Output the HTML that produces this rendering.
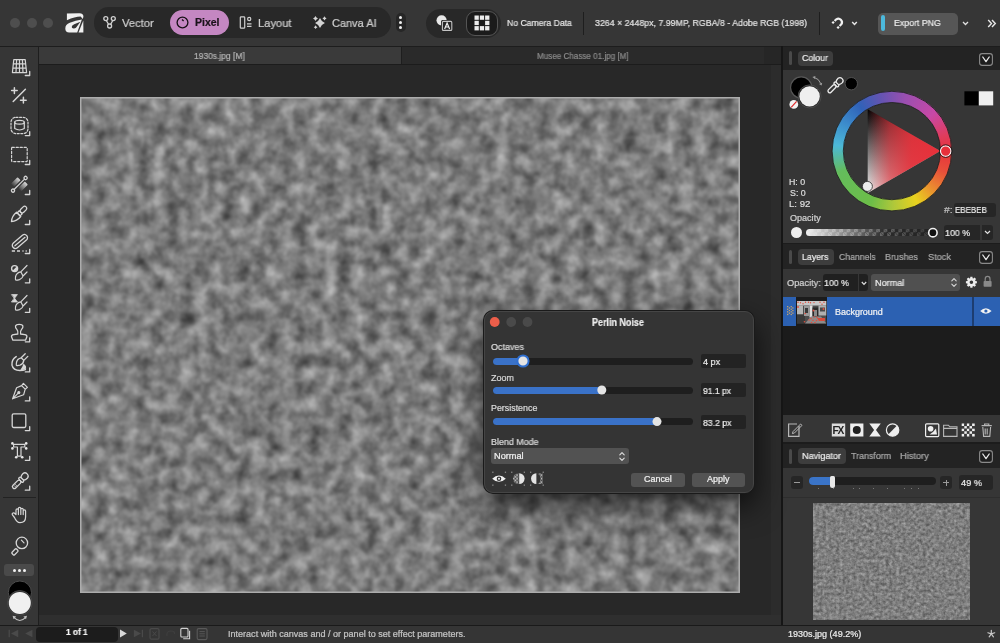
<!DOCTYPE html>
<html><head><meta charset="utf-8">
<style>
*{box-sizing:border-box;margin:0;padding:0}
html,body{width:1000px;height:643px;overflow:hidden;background:#363636;font-family:"Liberation Sans",sans-serif;color:#e6e6e6}
.abs{position:absolute}
.t{white-space:nowrap;line-height:1;will-change:transform;-webkit-text-stroke:0.22px currentColor}
svg{position:absolute;overflow:visible}
.dot{top:17.5px;width:10px;height:10px;border-radius:50%;background:#4e4e4e}
.pill{border-radius:15px;background:#282828}
.kd{left:399px;width:3.4px;height:3.4px;border-radius:50%;background:#f0f0f0}
.hdr{background:#232323}
.tabsel{background:#3d3d3d;border-radius:4px}
.ibox{background:#262626;border-radius:3px}
</style></head><body>
<div class="abs" style="left:0px;top:0px;width:1000.00px;height:46.00px;background:#363636;"></div>
<div class="abs" style="left:0px;top:46px;width:1000.00px;height:1.00px;background:#1d1d1d;"></div>
<div class="abs" style="left:0px;top:47px;width:38.00px;height:578.00px;background:#363636;"></div>
<div class="abs" style="left:38px;top:47px;width:1.00px;height:578.00px;background:#1e1e1e;"></div>
<div class="abs" style="left:39px;top:47px;width:742.00px;height:17.00px;background:#262626;"></div>
<div class="abs" style="left:39px;top:64px;width:742.00px;height:1.00px;background:#1c1c1c;"></div>
<div class="abs" style="left:39px;top:65px;width:742.00px;height:560.00px;background:#282828;"></div>
<div class="abs" style="left:771px;top:65px;width:10.00px;height:550.00px;background:#2c2c2c;"></div>
<div class="abs" style="left:39px;top:615px;width:742.00px;height:10.00px;background:#2f2f2f;"></div>
<div class="abs" style="left:781px;top:46px;width:2.00px;height:579.00px;background:#161616;"></div>
<div class="abs" style="left:783px;top:47px;width:217.00px;height:578.00px;background:#363636;"></div>
<div class="abs" style="left:0px;top:625px;width:1000.00px;height:1.00px;background:#1a1a1a;"></div>
<div class="abs" style="left:0px;top:626px;width:1000.00px;height:17.00px;background:#353535;"></div>
<div class="abs dot" style="left:10px"></div><div class="abs dot" style="left:26.5px"></div><div class="abs dot" style="left:43px"></div>
 <svg style="left:60px;top:8px" width="30" height="30" viewBox="0 0 30 30">
  <path fill="#f0f0f0" d="M6.9,5.4 L19.4,5.2 Q23.6,5.4 23.4,8.8 Q23.2,10.2 22.4,11 Q21.6,9.6 20.6,8.6 Q15,8.8 6.9,12.2 Z"/>
  <path fill="#f0f0f0" fill-rule="evenodd" d="M5.3,20.6 Q5.3,16.4 9.8,14.8 Q15.6,12.6 21.9,11.6 L17.2,24.6 L9.2,24.6 Q5.3,24.6 5.3,20.6 Z M11.7,18.9 Q11.7,17.2 14.2,16.2 L20.4,13.8 L16,19.8 Q15,20.6 13.6,20.5 Q11.7,20.3 11.7,18.9 Z"/>
  <path fill="#f0f0f0" d="M18.5,24.6 L23.3,12.6 L23.4,24.6 Z"/>
 </svg>
 <div class="abs pill" style="left:93.5px;top:7px;width:297.5px;height:30.5px"></div>
 <svg style="left:100px;top:13px" width="20" height="20" viewBox="0 0 20 20" fill="none" stroke="#d0d0d0" stroke-width="1.3">
  <circle cx="5.8" cy="5.6" r="2"/><circle cx="13.3" cy="5.6" r="2"/><circle cx="9.6" cy="13" r="2"/>
  <path d="M6.3,7.5 L8.6,11.3 M12.8,7.5 L10.6,11.3"/>
 </svg>
 <div class="abs" style="left:170px;top:10px;width:59px;height:25px;border-radius:12.5px;background:#c487c2"></div>
 <svg style="left:175px;top:15px" width="15" height="15" viewBox="0 0 15 15" fill="none" stroke="#151015" stroke-width="1.3">
  <circle cx="7.5" cy="7.5" r="5.4"/><path d="M7,4.5 L8.6,6"/>
 </svg>
 <svg style="left:236px;top:13px" width="20" height="20" viewBox="0 0 20 20" fill="none" stroke="#cfcfcf" stroke-width="1.2">
  <rect x="4.3" y="3.8" width="4.4" height="11.4" rx="0.8"/><circle cx="13.2" cy="6" r="1.6"/><path d="M11,10.9 H15.5 M11,13.3 H15.5"/>
 </svg>
 <svg style="left:0;top:0" width="1000" height="50" viewBox="0 0 1000 50"><path d="M320,18.1 Q321.37,21.63 324.9,23 Q321.37,24.37 320,27.9 Q318.63,24.37 315.1,23 Q318.63,21.63 320,18.1 Z M315.5,15.899999999999999 Q316.20,17.70 318.0,18.4 Q316.20,19.10 315.5,20.9 Q314.80,19.10 313.0,18.4 Q314.80,17.70 315.5,15.899999999999999 Z M324.5,16.299999999999997 Q325.09,17.81 326.6,18.4 Q325.09,18.99 324.5,20.5 Q323.91,18.99 322.4,18.4 Q323.91,17.81 324.5,16.299999999999997 Z M315.6,25.3 Q316.13,26.67 317.5,27.2 Q316.13,27.73 315.6,29.099999999999998 Q315.07,27.73 313.70000000000005,27.2 Q315.07,26.67 315.6,25.3 Z " fill="#d4d4d4"/></svg>
 <div class="abs" style="left:396px;top:13px;width:10px;height:19px;border-radius:5px;background:#262626"></div>
 <div class="abs kd" style="top:15.7px"></div><div class="abs kd" style="top:20.8px"></div><div class="abs kd" style="top:25.9px"></div>
 <div class="abs pill" style="left:426px;top:8.5px;width:75px;height:29.5px"></div>
 <svg style="left:0;top:0" width="1000" height="50" viewBox="0 0 1000 50">
  <circle cx="441.6" cy="20.3" r="5.1" fill="#e8e8e8"/>
  <rect x="441" y="20" width="12.2" height="11.8" rx="1.6" fill="#262626"/>
  <rect x="442.4" y="21.4" width="9.4" height="9" rx="1" fill="#262626" stroke="#c4c4c4" stroke-width="1.1"/>
  <path d="M444.6,29 L447.1,23 L449.6,29 M445.5,27 H448.7" fill="none" stroke="#f0f0f0" stroke-width="1.2"/>
 </svg>
 <div class="abs" style="left:466.4px;top:11px;width:31.8px;height:24.6px;border-radius:9px;background:#1b1b1b;border:1.4px solid #555"></div>
 <svg style="left:474px;top:15px" width="16" height="16" viewBox="0 0 16 16" fill="#ececec">
  <rect x="0.5" y="0.5" width="4.3" height="4.3"/><rect x="5.8" y="0.5" width="4.3" height="4.3"/><rect x="11.1" y="0.5" width="4.3" height="4.3"/>
  <rect x="0.5" y="5.8" width="4.3" height="4.3"/><rect x="11.1" y="5.8" width="4.3" height="4.3"/>
  <rect x="0.5" y="11.1" width="4.3" height="4.3"/><rect x="5.8" y="11.1" width="4.3" height="4.3"/><rect x="11.1" y="11.1" width="4.3" height="4.3"/>
 </svg>
<div class="abs" style="left:583px;top:12px;width:1.00px;height:22.50px;background:#1e1e1e;"></div>
<div class="abs" style="left:819px;top:12px;width:1.00px;height:22.50px;background:#1e1e1e;"></div>
<svg style="left:0;top:0" width="1000" height="50" viewBox="0 0 1000 50" fill="none" stroke="#f0f0f0" stroke-width="2.2">
  <path d="M836.3,19.3 A3.6,3.6 0 0,1 841.3,24.3 M836.3,19.3 L834.6,21 M841.3,24.3 L839.6,26"/>
  <path d="M833.9,21.7 L832.3,23.3 M838.9,26.7 L837.3,28.3" stroke-width="2.3"/>
 </svg>
 <svg style="left:851px;top:21px" width="7" height="5" viewBox="0 0 7 5" fill="none" stroke="#e8e8e8" stroke-width="1.5"><path d="M1.2,1 L3.5,3.4 L5.8,1"/></svg>
 <div class="abs" style="left:877.5px;top:12.5px;width:80px;height:22px;border-radius:5px;background:#565656"></div>
 <div class="abs" style="left:881px;top:15px;width:4px;height:16px;border-radius:2px;background:#4cb9dc"></div>
 <svg style="left:962px;top:21px" width="7" height="5" viewBox="0 0 7 5" fill="none" stroke="#e0e0e0" stroke-width="1.3"><path d="M1,1 L3.5,3.5 L6,1"/></svg>
 <svg style="left:987px;top:19px" width="10" height="9" viewBox="0 0 10 9" fill="none" stroke="#e8e8e8" stroke-width="1.4"><path d="M1.2,1 L4.5,4.5 L1.2,8 M5,1 L8.3,4.5 L5,8"/></svg>
<div class="abs t" style="left:122.14px;top:18.00px;font-size:11.59px;color:#cfcfcf;transform:scaleX(0.9684);transform-origin:0 0;">Vector</div>
<div class="abs t" style="left:194.92px;top:18.00px;font-size:10.43px;color:#1a121a;font-weight:bold;transform:scaleX(1.0062);transform-origin:0 0;">Pixel</div>
<div class="abs t" style="left:257.61px;top:18.00px;font-size:11.38px;color:#cfcfcf;transform:scaleX(0.9800);transform-origin:0 0;">Layout</div>
<div class="abs t" style="left:331.70px;top:18.00px;font-size:11.38px;color:#cfcfcf;transform:scaleX(0.9654);transform-origin:0 0;">Canva AI</div>
<div class="abs t" style="left:507.11px;top:19.00px;font-size:9.28px;color:#e4e4e4;transform:scaleX(0.9328);transform-origin:0 0;">No Camera Data</div>
<div class="abs t" style="left:595.05px;top:19.00px;font-size:9.28px;color:#e4e4e4;transform:scaleX(0.9504);transform-origin:0 0;">3264 × 2448px, 7.99MP, RGBA/8 - Adobe RGB (1998)</div>
<div class="abs t" style="left:894.00px;top:18.00px;font-size:9.42px;color:#ececec;transform:scaleX(0.9345);transform-origin:0 0;">Export PNG</div>
<div class="abs" style="left:39px;top:47px;width:362.00px;height:17.00px;background:#3a3a3a;"></div>
<div class="abs" style="left:401px;top:47px;width:1.00px;height:17.00px;background:#1e1e1e;"></div>
<div class="abs" style="left:402px;top:47px;width:362.00px;height:17.00px;background:#2a2a2a;"></div>
<div class="abs t" style="left:194.16px;top:52.00px;font-size:8.70px;color:#b4b4b4;transform:scaleX(0.9742);transform-origin:0 0;">1930s.jpg [M]</div>
<div class="abs t" style="left:536.85px;top:52.00px;font-size:8.70px;color:#8a8a8a;transform:scaleX(0.9305);transform-origin:0 0;">Musee Chasse 01.jpg [M]</div>
<svg style="left:80px;top:97px;overflow:hidden" width="660" height="496" viewBox="0 0 660 496">
 <defs><filter id="pn" filterUnits="userSpaceOnUse" x="-12" y="-12" width="684" height="520" color-interpolation-filters="sRGB">
  <feTurbulence type="fractalNoise" baseFrequency="0.07" numOctaves="5" seed="7" result="n"/>
  <feComponentTransfer in="n"><feFuncR type="linear" slope="0.8" intercept="0.09"/><feFuncG type="linear" slope="0.8" intercept="0.09"/><feFuncB type="linear" slope="0.8" intercept="0.09"/><feFuncA type="linear" slope="0" intercept="1"/></feComponentTransfer>
  <feColorMatrix type="saturate" values="0"/>
  <feGaussianBlur stdDeviation="0.9"/>
 </filter></defs>
 <rect x="-12" y="-12" width="684" height="520" filter="url(#pn)"/>
 <rect x="0.75" y="0.75" width="658.5" height="494.5" fill="none" stroke="#acacac" stroke-width="1.5"/>
</svg>
<svg style="left:0;top:0" width="38" height="643" viewBox="0 0 38 643" fill="none" stroke="#d6d6d6" stroke-width="1.2" stroke-linecap="round" stroke-linejoin="round">
<path d="M29.7,71.5 V75.5 H25.3" stroke-width="1.3"/><path d="M29.7,131.6 V135.6 H25.3" stroke-width="1.3"/><path d="M29.7,160.5 V164.5 H25.3" stroke-width="1.3"/><path d="M29.7,190.5 V194.5 H25.3" stroke-width="1.3"/><path d="M29.7,220.5 V224.5 H25.3" stroke-width="1.3"/><path d="M29.7,249.5 V253.5 H25.3" stroke-width="1.3"/><path d="M29.7,278.8 V282.8 H25.3" stroke-width="1.3"/><path d="M29.7,308.3 V312.3 H25.3" stroke-width="1.3"/><path d="M29.7,337.8 V341.8 H25.3" stroke-width="1.3"/><path d="M29.7,367.9 V371.9 H25.3" stroke-width="1.3"/><path d="M29.7,396.9 V400.9 H25.3" stroke-width="1.3"/><path d="M29.7,426.6 V430.6 H25.3" stroke-width="1.3"/><path d="M29.7,456.3 V460.3 H25.3" stroke-width="1.3"/><path d="M29.7,486.2 V490.2 H25.3" stroke-width="1.3"/>
<path d="M13.8,59.6 H25.2 L26.6,72.6 H12.4 Z M16.6,59.6 L16,72.6 M19.5,59.6 V72.6 M22.4,59.6 L23,72.6 M13.2,63.9 H25.7 M12.8,68.2 H26.2"/>
<path d="M14.4,87.8 V93.5 M11.6,90.6 H17.2 M25.4,89.3 L13.2,101.5 M23.4,97.3 V103 M20.5,100.2 H26.2" stroke-width="1.5"/>
<rect x="11" y="117.3" width="17" height="16.3" rx="5" stroke-dasharray="2 1.6"/><ellipse cx="19.5" cy="122.2" rx="4.8" ry="1.9"/><path d="M14.7,122.2 V128.6 Q19.5,131.4 24.3,128.6 V122.2"/>
<rect x="11.6" y="147.4" width="15.6" height="14.2" rx="0.5" stroke-dasharray="2.2 1.8"/>
<defs><linearGradient id="gg" x1="0" y1="0" x2="1" y2="0"><stop offset="0" stop-color="#3c3c3c"/><stop offset="1" stop-color="#d8d8d8"/></linearGradient></defs><g transform="translate(19.3,184.3) rotate(-45)"><rect x="-5.6" y="-6.3" width="9.4" height="4.4" rx="0.8" fill="url(#gg)" stroke="none"/><rect x="-3.6" y="1.9" width="9.4" height="4.4" rx="0.8" fill="url(#gg)" stroke="none"/><path d="M-7.4,0 H7.4" stroke-width="1.2"/><circle cx="-8.9" cy="0" r="1.6" stroke-width="1.3"/><circle cx="8.9" cy="0" r="1.6" stroke-width="1.3"/></g>
<g transform="translate(19.4,213.6) rotate(-45)" stroke-width="1.3"><rect x="1.9" y="-2.1" width="7.6" height="4.2" rx="2.1"/><rect x="-1.1" y="-2.1" width="3" height="4.2"/><path d="M-1.1,-3 Q-7.2,-3.6 -11.2,0 Q-7.2,3.6 -1.1,3 Z"/></g>
<g transform="translate(19.9,241.5) rotate(-40)" stroke-width="1.3"><rect x="-9" y="-3.1" width="18" height="6.2" rx="3.1"/><path d="M-6.6,0.1 H6.6"/></g><path d="M11.8,251 H15 M17,251 H20 M22.4,251 H23.6 M25.6,251 H26.8" stroke-width="1.6" stroke-linecap="butt"/>
<circle cx="14.6" cy="268.6" r="3" stroke-width="1.4"/><path d="M12.5,270.7 A3,3 0 0,0 16.7,266.5 Z" fill="#d6d6d6" stroke="none"/><path d="M27,265.5 L20.8,271.8 M27,272 L23,276 M20.8,271.8 L23,276 M20.8,271.8 Q16.5,272.5 15.6,276.5 Q15.2,279.8 15.8,280 Q16.4,280.4 19.5,279.6 Q22.6,278.4 23,276"/>
<path d="M11.8,294.6 H17.4 L14.6,298.2 Z M11.8,302 H17.4 L14.6,298.2 Z" fill="#d6d6d6" stroke="#d6d6d6" stroke-width="0.8"/><path d="M27,295.5 L20.8,301.8 M27,302 L23,306 M20.8,301.8 L23,306 M20.8,301.8 Q16.5,302.5 15.6,306.5 Q15.2,309.8 15.8,310 Q16.4,310.4 19.5,309.6 Q22.6,308.4 23,306"/>
<path d="M17.8,334 Q18.4,331.2 17,329.6 Q15.1,327.6 15.5,325.9 Q16.1,324.3 19.2,324.3 Q22.3,324.3 22.9,325.9 Q23.3,327.6 21.4,329.6 Q20,331.2 20.6,334 M17.8,334 L13.6,334.6 Q11.3,335 11.5,336.8 L12.9,340.2 H25.5 L26.9,336.8 Q27.1,335 24.8,334.6 L20.6,334" stroke-width="1.3"/>
<path d="M16.2,356.6 Q11.4,359.6 12,365.2 Q13.2,370.4 19.8,370.6 Q23.4,370.6 25.4,369.6" stroke-width="1.5"/><path d="M20.4,369.8 Q24.4,370.6 26.2,368.6 Q26.4,365.6 23.6,363.6 Q22.6,367 20.4,369.8 Z" fill="#d6d6d6" stroke="none"/><path d="M25.2,353.8 L21.2,357.8 M27.8,356.4 L23.8,360.4 M21.2,357.8 L23.8,360.4 M21.2,357.8 Q17.4,358.6 16.6,362 Q16,365.2 16.6,365.4 Q17.2,365.8 20,365.2 Q23.2,364.2 23.8,360.4" stroke-width="1.3"/>
<path d="M21.6,385.6 L23.4,383.4 L27.4,387.4 L25.2,389.2 Z M21.6,385.6 L16.6,387.8 L12.6,398.8 L23.6,394.8 L25.2,389.2 M12.6,398.8 L18,393.4"/><circle cx="18.8" cy="392.6" r="1" fill="#d6d6d6"/>
<rect x="12.2" y="413.9" width="13.6" height="13.6" rx="1.4" fill="#2c2c2c" stroke-width="1.3"/>
<path d="M13.6,444.3 H24.8 M13.6,444.3 V447 M24.8,444.3 V447 M13.6,447 H17.4 V456.2 M24.8,447 H21 V456.2 M17.4,456.2 H21"/><circle cx="12.4" cy="443.4" r="1.3" fill="#e8e8e8" stroke="none"/><circle cx="26.2" cy="443.4" r="1.3" fill="#e8e8e8" stroke="none"/><circle cx="12.4" cy="448.4" r="1.3" fill="#e8e8e8" stroke="none"/><circle cx="26.2" cy="448.4" r="1.3" fill="#e8e8e8" stroke="none"/><circle cx="16.2" cy="457.2" r="1.3" fill="#e8e8e8" stroke="none"/><circle cx="22.2" cy="457.2" r="1.3" fill="#e8e8e8" stroke="none"/>
<g transform="translate(21.2,479.8) rotate(-45)" stroke-width="1.3"><rect x="-11.6" y="-1.9" width="10.4" height="3.8" rx="1.9"/><rect x="-1.2" y="-2.9" width="2.6" height="5.8" rx="1.1"/><path d="M1.4,-1.8 Q3,-3.3 5.8,-3.2 Q8.4,-2.8 8.4,0 Q8.4,2.8 5.8,3.2 Q3,3.3 1.4,1.8"/><path d="M-9,-0.6 V0.6 M-7.4,-0.6 V0.6" stroke-width="0.9"/></g>
</svg>
<div class="abs" style="left:3px;top:496.5px;width:33.00px;height:1.50px;background:#222222;"></div>
<svg style="left:0;top:0" width="38" height="643" viewBox="0 0 38 643" fill="none" stroke="#d6d6d6" stroke-width="1.2" stroke-linecap="round" stroke-linejoin="round">
<path d="M14.5,517.5 L12.6,515.2 Q11.6,513.6 13,513 Q14,512.6 15.4,514 L16,514.6 V510.2 Q16,508.8 17.2,508.8 Q18.4,508.8 18.4,510.2 V508.6 Q18.4,507.3 19.6,507.3 Q20.8,507.3 20.8,508.6 V509.6 Q20.8,508.3 22,508.3 Q23.2,508.3 23.2,509.6 V511 Q23.3,509.8 24.4,509.8 Q25.6,509.8 25.6,511 V517 Q25.6,522.6 20,522.6 Q16.6,522.6 14.5,517.5 Z M18.4,510 V514.6 M20.8,509.4 V514.4 M23.2,510.4 V514.6"/>
<circle cx="21.9" cy="542.9" r="5.7" stroke-width="1.3"/><path d="M21.4,540.2 L24,542.8" stroke-width="1.2"/><g transform="translate(15.2,551.6) rotate(-45)"><rect x="-3.6" y="-1.8" width="6.4" height="3.6" rx="1" stroke-width="1.3"/></g>
</svg>
<div class="abs" style="left:4px;top:563.6px;width:30.20px;height:12.70px;background:#4a4a4a;border-radius:3px;"></div>
<div class="abs" style="left:12.700000000000001px;top:568.5px;width:3.2px;height:3.2px;border-radius:50%;background:#f2f2f2"></div><div class="abs" style="left:17.599999999999998px;top:568.5px;width:3.2px;height:3.2px;border-radius:50%;background:#f2f2f2"></div><div class="abs" style="left:22.5px;top:568.5px;width:3.2px;height:3.2px;border-radius:50%;background:#f2f2f2"></div>
<svg style="left:0;top:0" width="38" height="643" viewBox="0 0 38 643"><circle cx="19.9" cy="592.6" r="11.6" fill="#000" stroke="#4c4c4c" stroke-width="1"/><circle cx="19.8" cy="602.9" r="12.3" fill="#2e2e2e" stroke="#4a4a4a" stroke-width="0.9"/><circle cx="19.8" cy="602.9" r="11" fill="#f0f0f0"/><path d="M14.2,617.6 Q19.8,623.4 25.4,617.6" fill="none" stroke="#c0c0c0" stroke-width="1.2"/><path d="M12.6,615.8 L16.2,616.6 L13.6,619.2 Z M27,615.8 L23.4,616.6 L26,619.2 Z" fill="#c0c0c0"/></svg>
<div class="abs" style="left:783px;top:47px;width:217.00px;height:22.50px;background:#232323;"></div>
<div class="abs" style="left:789.2px;top:51px;width:2.80px;height:14.20px;background:#4a4a4a;border-radius:1.5px;"></div>
<div class="abs" style="left:798px;top:50.7px;width:35.30px;height:15.10px;background:#3d3d3d;border-radius:4px;"></div>
<div class="abs t" style="left:802.16px;top:53.00px;font-size:9.42px;color:#ececec;transform:scaleX(0.9399);transform-origin:0 0;">Colour</div>
<svg style="left:979px;top:52.5px" width="14" height="13" viewBox="0 0 14 13"><rect x="0.6" y="0.6" width="12.8" height="11.8" rx="2.6" fill="#1e1e1e" stroke="#8a8a8a" stroke-width="1.1"/><path d="M3.8,4 L7,8.6 L10.2,4" fill="none" stroke="#e8e8e8" stroke-width="1.3" stroke-linecap="round" stroke-linejoin="round"/></svg>
<svg style="left:783px;top:69px" width="217" height="175" viewBox="783 69 217 175">
 <circle cx="801.2" cy="87.5" r="10.6" fill="#000" stroke="#575757" stroke-width="1.1"/>
 <circle cx="809.6" cy="96.4" r="11.5" fill="#2b2b2b" stroke="#4e4e4e" stroke-width="0.9"/>
 <circle cx="809.6" cy="96.4" r="10.2" fill="#efefef"/>
 <circle cx="793.8" cy="104.4" r="5.2" fill="#333"/>
 <circle cx="793.8" cy="104.4" r="4.4" fill="#f2f2f2"/>
 <path d="M791.2,107.4 L796.6,101.4" stroke="#e02828" stroke-width="1.2"/>
 <path d="M814,77.4 Q819,78.6 820.8,83.6" fill="none" stroke="#a0a0a0" stroke-width="1"/><path d="M812.4,77 L815.4,76 L815,79 Z M821.6,85.6 L819,84 L822.2,82.8 Z" fill="#a0a0a0"/>
 <g transform="translate(836.3,84.4) rotate(-45)" fill="none" stroke="#ececec" stroke-width="1.3"><rect x="-11" y="-1.8" width="9.8" height="3.6" rx="1.8"/><rect x="-1.2" y="-2.8" width="2.6" height="5.6" rx="1.1"/><path d="M1.4,-1.7 Q3,-3.2 5.6,-3.1 Q8.2,-2.7 8.2,0 Q8.2,2.7 5.6,3.1 Q3,3.2 1.4,1.7"/></g>
 <circle cx="851.3" cy="83.7" r="6.2" fill="#000" stroke="#555" stroke-width="0.9"/>
 <rect x="964.4" y="91.3" width="14.4" height="14.1" fill="#000"/>
 <rect x="978.8" y="91.3" width="14.4" height="14.1" fill="#efefef"/>
</svg>
<div class="abs" style="left:831.9px;top:91.1px;width:120.0px;height:120.0px;border-radius:50%;background:conic-gradient(from 90deg,#e6333c 0deg,#e8503a 22deg,#ea8a30 42deg,#e8d21e 64deg,#b0c83a 88deg,#6cbd48 112deg,#64bc5c 158deg,#4cb8d8 186deg,#3c8ccc 210deg,#3062b8 234deg,#6454b2 258deg,#9a4fb0 284deg,#c848a6 318deg,#e03c5c 344deg,#e6333c 360deg);-webkit-mask:radial-gradient(circle closest-side,transparent 47.9px,#000 48.699999999999996px);mask:radial-gradient(circle closest-side,transparent 47.9px,#000 48.699999999999996px)"></div>
<svg style="left:0;top:0" width="1000" height="643" viewBox="0 0 1000 643">
 <defs>
  <linearGradient id="tg1" gradientUnits="userSpaceOnUse" x1="867.6999999999999" y1="109.18437045683318" x2="867.7" y2="193.01562954316682"><stop offset="0" stop-color="#000"/><stop offset="1" stop-color="#f0f0f0"/></linearGradient>
  <linearGradient id="tg2" gradientUnits="userSpaceOnUse" x1="867.6999999999999" y1="151.1" x2="940.3" y2="151.1"><stop offset="0" stop-color="#e8303a" stop-opacity="0"/><stop offset="0.3" stop-color="#e8303a" stop-opacity="0.62"/><stop offset="0.6" stop-color="#e8303a" stop-opacity="0.92"/><stop offset="1" stop-color="#e8303a" stop-opacity="1"/></linearGradient>
 </defs>
 <path d="M940.30,151.10 L867.70,193.02 L867.70,109.18 Z" fill="url(#tg1)"/>
 <path d="M940.30,151.10 L867.70,193.02 L867.70,109.18 Z" fill="url(#tg2)"/>
 <circle cx="891.9" cy="151.1" r="59.8" fill="none" stroke="#232323" stroke-width="0.9"/>
 <circle cx="891.9" cy="151.1" r="48.6" fill="none" stroke="#232323" stroke-width="0.9"/>
 <circle cx="945.7" cy="151.1" r="5.3" fill="#e8303a" stroke="#f4f4f4" stroke-width="1.3"/>
 <circle cx="945.7" cy="151.1" r="6.3" fill="none" stroke="#111" stroke-width="0.8"/>
 <circle cx="867.4" cy="186.4" r="5" fill="#ececec" stroke="#2a2a2a" stroke-width="0.8"/>
</svg>
<div class="abs t" style="left:789.09px;top:179.00px;font-size:8.26px;color:#dcdcdc;transform:scaleX(1.0698);transform-origin:0 0;">H: 0</div>
<div class="abs t" style="left:789.60px;top:190.00px;font-size:8.26px;color:#dcdcdc;transform:scaleX(1.0681);transform-origin:0 0;">S: 0</div>
<div class="abs t" style="left:789.23px;top:200.00px;font-size:8.55px;color:#dcdcdc;transform:scaleX(1.1276);transform-origin:0 0;">L: 92</div>
<div class="abs t" style="left:943.85px;top:206.00px;font-size:9.28px;color:#bdbdbd;transform:scaleX(1.1295);transform-origin:0 0;">#:</div>
<div class="abs" style="left:954.3px;top:203px;width:41.30px;height:13.60px;background:#262626;border-radius:3px;"></div>
<div class="abs t" style="left:955.36px;top:206.00px;font-size:9.13px;color:#ececec;transform:scaleX(0.8717);transform-origin:0 0;">EBEBEB</div>
<div class="abs t" style="left:789.79px;top:215.00px;font-size:8.26px;color:#d0d0d0;transform:scaleX(1.0965);transform-origin:0 0;">Opacity</div>
<div class="abs" style="left:791px;top:227.2px;width:11px;height:11px;border-radius:50%;background:#efefef"></div>
<div class="abs" style="left:806.4px;top:229px;width:131px;height:7.4px;border-radius:3.7px;overflow:hidden;background:#2c2c2c"><div class="abs" style="left:0;top:0;width:131px;height:7.4px;background-image:linear-gradient(45deg,#777 25%,transparent 25%,transparent 75%,#777 75%),linear-gradient(45deg,#777 25%,transparent 25%,transparent 75%,#777 75%);background-size:7.4px 7.4px;background-position:0 0,3.7px 3.7px;opacity:0.9"></div><div class="abs" style="left:0;top:0;width:131px;height:7.4px;background:linear-gradient(90deg,rgba(240,240,240,1) 0%,rgba(240,240,240,0.55) 25%,rgba(40,40,40,0.2) 60%,rgba(30,30,30,0.7) 100%)"></div></div>
<svg style="left:0;top:0" width="1000" height="643" viewBox="0 0 1000 643"><circle cx="932.9" cy="232.7" r="4.2" fill="#111" stroke="#f0f0f0" stroke-width="1.6"/></svg>
<div class="abs" style="left:943.5px;top:224.6px;width:36.30px;height:15.80px;background:#262626;border-radius:3px 0 0 3px;"></div>
<div class="abs t" style="left:944.83px;top:229.00px;font-size:9.28px;color:#ececec;transform:scaleX(0.9575);transform-origin:0 0;">100 %</div>
<div class="abs" style="left:981.5px;top:224.6px;width:11.00px;height:15.80px;background:#262626;border-radius:0 3px 3px 0;"></div>
<svg style="left:984px;top:230px" width="7" height="5" viewBox="0 0 7 5" fill="none" stroke="#e0e0e0" stroke-width="1.2"><path d="M1,1 L3.5,3.5 L6,1"/></svg>
<div class="abs" style="left:783px;top:243px;width:217.00px;height:1.00px;background:#1c1c1c;"></div>
<div class="abs" style="left:783px;top:244px;width:217.00px;height:24.60px;background:#232323;"></div>
<div class="abs" style="left:789px;top:249.9px;width:2.80px;height:14.30px;background:#4a4a4a;border-radius:1.5px;"></div>
<div class="abs" style="left:797.6px;top:249.2px;width:36.30px;height:15.40px;background:#3d3d3d;border-radius:4px;"></div>
<div class="abs t" style="left:802.00px;top:252.00px;font-size:9.57px;color:#ececec;transform:scaleX(0.9168);transform-origin:0 0;">Layers</div>
<div class="abs t" style="left:838.57px;top:252.00px;font-size:9.57px;color:#a8a8a8;transform:scaleX(0.9091);transform-origin:0 0;">Channels</div>
<div class="abs t" style="left:884.88px;top:252.00px;font-size:9.57px;color:#a8a8a8;transform:scaleX(0.9381);transform-origin:0 0;">Brushes</div>
<div class="abs t" style="left:927.59px;top:252.00px;font-size:9.57px;color:#a8a8a8;transform:scaleX(0.9582);transform-origin:0 0;">Stock</div>
<svg style="left:979px;top:250.6px" width="14" height="13" viewBox="0 0 14 13"><rect x="0.6" y="0.6" width="12.8" height="11.8" rx="2.6" fill="#1e1e1e" stroke="#8a8a8a" stroke-width="1.1"/><path d="M3.8,4 L7,8.6 L10.2,4" fill="none" stroke="#e8e8e8" stroke-width="1.3" stroke-linecap="round" stroke-linejoin="round"/></svg>
<div class="abs t" style="left:786.59px;top:279.00px;font-size:9.28px;color:#d4d4d4;transform:scaleX(0.9926);transform-origin:0 0;">Opacity:</div>
<div class="abs" style="left:822.9px;top:274.1px;width:35.20px;height:16.50px;background:#202020;border-radius:3px 0 0 3px;"></div>
<div class="abs t" style="left:824.34px;top:279.00px;font-size:9.28px;color:#ececec;transform:scaleX(0.9495);transform-origin:0 0;">100 %</div>
<div class="abs" style="left:859.2px;top:274.1px;width:9.20px;height:16.50px;background:#202020;border-radius:0 3px 3px 0;"></div>
<svg style="left:861px;top:280.5px" width="6" height="5" viewBox="0 0 6 5" fill="none" stroke="#e0e0e0" stroke-width="1.2"><path d="M0.8,1 L3,3.3 L5.2,1"/></svg>
<div class="abs" style="left:871.3px;top:274.1px;width:89.10px;height:16.50px;background:#505050;border-radius:3px;"></div>
<div class="abs t" style="left:874.97px;top:279.00px;font-size:9.28px;color:#ececec;transform:scaleX(0.9782);transform-origin:0 0;">Normal</div>
<svg style="left:950px;top:276px" width="8" height="13" viewBox="0 0 8 13" fill="none" stroke="#d8d8d8" stroke-width="1.1" stroke-linecap="round" stroke-linejoin="round"><path d="M1.8,4.8 L4,2.6 L6.2,4.8 M1.8,8.2 L4,10.4 L6.2,8.2"/></svg>
<svg style="left:0;top:0" width="1000" height="643" viewBox="0 0 1000 643"><path d="M976.90,281.13 L976.90,283.27 L975.42,283.43 L975.11,284.17 L976.04,285.33 L974.53,286.84 L973.37,285.91 L972.63,286.22 L972.47,287.70 L970.33,287.70 L970.17,286.22 L969.43,285.91 L968.27,286.84 L966.76,285.33 L967.69,284.17 L967.38,283.43 L965.90,283.27 L965.90,281.13 L967.38,280.97 L967.69,280.23 L966.76,279.07 L968.27,277.56 L969.43,278.49 L970.17,278.18 L970.33,276.70 L972.47,276.70 L972.63,278.18 L973.37,278.49 L974.53,277.56 L976.04,279.07 L975.11,280.23 L975.42,280.97 Z M973.1999999999999,282.2 A1.8,1.8 0 1,0 969.6,282.2 A1.8,1.8 0 1,0 973.1999999999999,282.2 Z" fill="#ececec" fill-rule="evenodd"/><path d="M985.2,281 V279 Q985.2,276.3 987.6,276.3 Q990,276.3 990,279 V281" fill="none" stroke="#8a8a8a" stroke-width="1.2"/><rect x="983.6" y="281" width="8" height="5.8" rx="0.8" fill="#8a8a8a"/></svg>
<div class="abs" style="left:783px;top:297.2px;width:217.00px;height:29.00px;background:#2c61b2;"></div>
<div class="abs" style="left:972px;top:297.2px;width:2.00px;height:29.00px;background:#1d3d70;"></div>
<svg style="left:786px;top:305px" width="8" height="12" viewBox="0 0 8 12" fill="#c8a46a"><rect x="1" y="1" width="1.3" height="1.3"/><rect x="4.6" y="1" width="1.3" height="1.3"/><rect x="1" y="3.6" width="1.3" height="1.3"/><rect x="4.6" y="3.6" width="1.3" height="1.3"/><rect x="1" y="6.2" width="1.3" height="1.3"/><rect x="4.6" y="6.2" width="1.3" height="1.3"/><rect x="1" y="8.8" width="1.3" height="1.3"/><rect x="4.6" y="8.8" width="1.3" height="1.3"/><rect x="2.8" y="2.3" width="1.3" height="1.3"/><rect x="6.2" y="2.3" width="1.3" height="1.3"/><rect x="2.8" y="4.9" width="1.3" height="1.3"/><rect x="6.2" y="4.9" width="1.3" height="1.3"/><rect x="2.8" y="7.5" width="1.3" height="1.3"/><rect x="6.2" y="7.5" width="1.3" height="1.3"/></svg>
<div class="abs" style="left:796px;top:296.8px;width:31.00px;height:29.50px;background:#1c1c1c;"></div>
<svg style="left:796.8px;top:300.6px" width="29.3" height="22.4" viewBox="0 0 29.3 22.4">
 <rect width="29.3" height="22.4" fill="#4e4e4e"/>
 <rect x="0" y="0" width="29.3" height="4.5" fill="#c8c8c8"/>
 <rect x="0" y="4.5" width="6" height="9" fill="#b6b6b6"/>
 <rect x="0" y="13.5" width="8" height="9" fill="#3a3a3a"/>
 <rect x="7" y="5" width="5" height="10" fill="#9a9a9a"/>
 <rect x="8" y="7" width="3" height="5" fill="#3a3a3a"/>
 <rect x="12.5" y="4.5" width="3" height="12" fill="#e0e0e0"/>
 <rect x="15.5" y="6.5" width="6" height="9" fill="#2a2a2a"/>
 <rect x="17" y="9" width="3" height="6" fill="#8a8a8a"/>
 <rect x="21.5" y="4.5" width="7.8" height="10" fill="#b0b0b0"/>
 <rect x="23" y="6.5" width="5" height="4" fill="#4a4a4a"/>
 <path d="M8,22.4 L14,15.5 L24,15.5 L29.3,22.4 Z" fill="#8c8c8c"/>
 <path d="M20,17 h8 v3 h-6 z" fill="#d84a3a"/>
 <g fill="#e05040">
  <circle cx="1" cy="1.2" r="0.8"/><circle cx="3.5" cy="1.8" r="0.7"/><circle cx="8.5" cy="1.3" r="0.7"/><circle cx="11.5" cy="1.2" r="0.7"/><circle cx="13.5" cy="1.8" r="0.7"/><circle cx="17" cy="1.6" r="0.7"/><circle cx="23" cy="1.2" r="0.7"/><circle cx="27" cy="1.2" r="0.8"/><circle cx="6" cy="2.8" r="0.7"/><circle cx="25" cy="3.2" r="0.7"/>
  <circle cx="1" cy="6" r="1"/><circle cx="16.5" cy="9.5" r="0.9"/><circle cx="26.5" cy="8" r="1"/><circle cx="8.2" cy="12.5" r="0.8"/>
  <circle cx="14" cy="17.6" r="0.8"/><circle cx="17" cy="16" r="0.8"/><circle cx="20" cy="16.3" r="0.8"/><circle cx="12" cy="19" r="0.8"/><circle cx="16" cy="19.4" r="0.8"/><circle cx="19.5" cy="19.6" r="0.8"/><circle cx="23" cy="19.2" r="0.8"/><circle cx="14.5" cy="21.5" r="0.8"/><circle cx="18" cy="21.6" r="0.8"/><circle cx="7.5" cy="20.8" r="0.8"/>
 </g>
</svg>
<div class="abs t" style="left:834.78px;top:308.00px;font-size:8.70px;color:#f2f2f2;transform:scaleX(1.0303);transform-origin:0 0;">Background</div>
<svg style="left:979px;top:306px" width="14" height="10" viewBox="0 0 14 10"><path d="M1.2,5 Q6.8,-0.6 12.6,5 Q6.8,10.6 1.2,5 Z" fill="#f2f2f2"/><circle cx="6.9" cy="5" r="1.6" fill="#2c61b2"/></svg>
<div class="abs" style="left:783px;top:326.2px;width:217.00px;height:88.80px;background:#1c1c1c;"></div>
<svg style="left:0;top:0" width="1000" height="643" viewBox="0 0 1000 643"><path d="M799,426 V436.4 H788.6 V424 H797" fill="none" stroke="#b8b8b8" stroke-width="1.2"/><path d="M793,431.6 L800.6,424 L802,425.4 L794.4,433 L792.4,433.6 Z" fill="none" stroke="#b8b8b8" stroke-width="1"/><rect x="831.8" y="423.5" width="13.4" height="13" fill="#dcdcdc"/><text x="832.6" y="434.4" font-family="Liberation Sans" font-size="10.2" font-weight="bold" fill="#222" letter-spacing="-1.2">FX</text><rect x="850.2" y="423.5" width="13.2" height="13" fill="#efefef"/><circle cx="856.8" cy="430" r="4" fill="#202020"/><path d="M869.3,423.5 H880.8 Q878.5,426.5 876,430 Q878.5,433.5 880.8,436.5 H869.3 Q871.6,433.5 874.1,430 Q871.6,426.5 869.3,423.5 Z" fill="#efefef"/><circle cx="892.6" cy="430" r="6.2" fill="none" stroke="#efefef" stroke-width="1.2"/><path d="M897,425.6 A6.2,6.2 0 0,1 888.2,434.4 Z" fill="#efefef"/><rect x="925.6" y="423.8" width="13.2" height="12.8" rx="1" fill="none" stroke="#efefef" stroke-width="1.2"/><circle cx="930.6" cy="428.8" r="2.8" fill="#efefef"/><path d="M933,432 L936,428.5 L937,434.5 H929.5 Z" fill="#efefef"/><path d="M943.6,425.2 H948.4 L949.8,426.8 H957 V436.4 H943.6 Z M943.6,428.4 H957" fill="none" stroke="#b8b8b8" stroke-width="1.1"/><rect x="961.70" y="423.50" width="2.6" height="2.6" fill="#efefef"/><rect x="964.30" y="423.50" width="2.6" height="2.6" fill="#3a3a3a"/><rect x="966.90" y="423.50" width="2.6" height="2.6" fill="#efefef"/><rect x="969.50" y="423.50" width="2.6" height="2.6" fill="#3a3a3a"/><rect x="972.10" y="423.50" width="2.6" height="2.6" fill="#efefef"/><rect x="961.70" y="426.10" width="2.6" height="2.6" fill="#3a3a3a"/><rect x="964.30" y="426.10" width="2.6" height="2.6" fill="#efefef"/><rect x="966.90" y="426.10" width="2.6" height="2.6" fill="#3a3a3a"/><rect x="969.50" y="426.10" width="2.6" height="2.6" fill="#efefef"/><rect x="972.10" y="426.10" width="2.6" height="2.6" fill="#3a3a3a"/><rect x="961.70" y="428.70" width="2.6" height="2.6" fill="#efefef"/><rect x="964.30" y="428.70" width="2.6" height="2.6" fill="#3a3a3a"/><rect x="966.90" y="428.70" width="2.6" height="2.6" fill="#efefef"/><rect x="969.50" y="428.70" width="2.6" height="2.6" fill="#3a3a3a"/><rect x="972.10" y="428.70" width="2.6" height="2.6" fill="#efefef"/><rect x="961.70" y="431.30" width="2.6" height="2.6" fill="#3a3a3a"/><rect x="964.30" y="431.30" width="2.6" height="2.6" fill="#efefef"/><rect x="966.90" y="431.30" width="2.6" height="2.6" fill="#3a3a3a"/><rect x="969.50" y="431.30" width="2.6" height="2.6" fill="#efefef"/><rect x="972.10" y="431.30" width="2.6" height="2.6" fill="#3a3a3a"/><rect x="961.70" y="433.90" width="2.6" height="2.6" fill="#efefef"/><rect x="964.30" y="433.90" width="2.6" height="2.6" fill="#3a3a3a"/><rect x="966.90" y="433.90" width="2.6" height="2.6" fill="#efefef"/><rect x="969.50" y="433.90" width="2.6" height="2.6" fill="#3a3a3a"/><rect x="972.10" y="433.90" width="2.6" height="2.6" fill="#efefef"/><path d="M981.6,425.6 H991.8 M984.6,425.6 V424 H988.8 V425.6 M982.8,427 L983.6,436.4 H989.8 L990.6,427 M985.2,428.4 V434.6 M987.2,428.4 V434.6" fill="none" stroke="#b8b8b8" stroke-width="1.1"/></svg>
<div class="abs" style="left:783px;top:442.4px;width:217.00px;height:1.60px;background:#1c1c1c;"></div>
<div class="abs" style="left:783px;top:444px;width:217.00px;height:23.70px;background:#232323;"></div>
<div class="abs" style="left:789px;top:448.5px;width:2.80px;height:15.00px;background:#4a4a4a;border-radius:1.5px;"></div>
<div class="abs" style="left:797.9px;top:448.2px;width:48.10px;height:15.70px;background:#3d3d3d;border-radius:4px;"></div>
<div class="abs t" style="left:801.67px;top:451.00px;font-size:9.57px;color:#ececec;transform:scaleX(0.9529);transform-origin:0 0;">Navigator</div>
<div class="abs t" style="left:851.22px;top:451.00px;font-size:9.57px;color:#a8a8a8;transform:scaleX(0.9288);transform-origin:0 0;">Transform</div>
<div class="abs t" style="left:900.46px;top:451.00px;font-size:9.57px;color:#a8a8a8;transform:scaleX(0.9695);transform-origin:0 0;">History</div>
<svg style="left:979px;top:449.5px" width="14" height="13" viewBox="0 0 14 13"><rect x="0.6" y="0.6" width="12.8" height="11.8" rx="2.6" fill="#1e1e1e" stroke="#8a8a8a" stroke-width="1.1"/><path d="M3.8,4 L7,8.6 L10.2,4" fill="none" stroke="#e8e8e8" stroke-width="1.3" stroke-linecap="round" stroke-linejoin="round"/></svg>
<div class="abs" style="left:791px;top:476px;width:11.70px;height:13.30px;background:#262626;border-radius:3px;"></div>
<div class="abs" style="left:793.8px;top:482.2px;width:6.20px;height:1.10px;background:#9a9a9a;"></div>
<div class="abs" style="left:808.6px;top:477.2px;width:127.20px;height:8.10px;background:#1e1e1e;border-radius:4px;"></div>
<div class="abs" style="left:808.6px;top:477.2px;width:23.90px;height:8.10px;background:#3a74c8;border-radius:4px 0 0 4px;"></div>
<div class="abs" style="left:830.2px;top:476px;width:4.40px;height:12.00px;background:#e8e8e8;border-radius:1.5px 1.5px 2.5px 2.5px;"></div>
<div class="abs" style="left:817.5px;top:488px;width:1.00px;height:1.20px;background:#777;"></div>
<div class="abs" style="left:832.5px;top:488px;width:1.00px;height:1.20px;background:#777;"></div>
<div class="abs" style="left:853.0px;top:488px;width:1.00px;height:1.20px;background:#777;"></div>
<div class="abs" style="left:859.0px;top:488px;width:1.00px;height:1.20px;background:#777;"></div>
<div class="abs" style="left:872.5px;top:488px;width:1.00px;height:1.20px;background:#777;"></div>
<div class="abs" style="left:886.5px;top:488px;width:1.00px;height:1.20px;background:#777;"></div>
<div class="abs" style="left:903.5px;top:488px;width:1.00px;height:1.20px;background:#777;"></div>
<div class="abs" style="left:910.5px;top:488px;width:1.00px;height:1.20px;background:#777;"></div>
<div class="abs" style="left:917.5px;top:488px;width:1.00px;height:1.20px;background:#777;"></div>
<div class="abs" style="left:940.2px;top:476px;width:11.80px;height:13.30px;background:#262626;border-radius:3px;"></div>
<div class="abs" style="left:942.8px;top:482.2px;width:6.60px;height:1.10px;background:#9a9a9a;"></div>
<div class="abs" style="left:945.6px;top:479.6px;width:1.10px;height:6.30px;background:#9a9a9a;"></div>
<div class="abs" style="left:959.3px;top:475px;width:33.70px;height:14.70px;background:#262626;border-radius:3px;"></div>
<div class="abs t" style="left:960.72px;top:479.00px;font-size:9.28px;color:#ececec;transform:scaleX(0.9885);transform-origin:0 0;">49 %</div>
<div class="abs" style="left:783px;top:497px;width:217.00px;height:1.00px;background:#2e2e2e;"></div>
<svg style="left:812.5px;top:502.9px" width="157" height="116.5" viewBox="0 0 157 116.5">
 <defs><filter id="pn2" x="0" y="0" width="100%" height="100%" color-interpolation-filters="sRGB">
  <feTurbulence type="fractalNoise" baseFrequency="0.3" numOctaves="3" seed="3" result="n"/>
  <feComponentTransfer in="n"><feFuncR type="linear" slope="0.55" intercept="0.22"/><feFuncG type="linear" slope="0.55" intercept="0.22"/><feFuncB type="linear" slope="0.55" intercept="0.22"/><feFuncA type="linear" slope="0" intercept="1"/></feComponentTransfer>
  <feColorMatrix type="saturate" values="0"/>
 </filter></defs>
 <rect x="0" y="0" width="157" height="116.5" filter="url(#pn2)"/>
</svg>
<div class="abs" style="left:36px;top:627.2px;width:81.60px;height:14.40px;background:#1c1c1c;border-radius:4px;"></div>
<div class="abs t" style="left:66.31px;top:628.00px;font-size:8.41px;color:#f4f4f4;font-weight:bold;transform:scaleX(0.9800);transform-origin:0 0;">1 of 1</div>
<svg style="left:0;top:0" width="1000" height="643" viewBox="0 0 1000 643"><path d="M9.2,629.8 V637.2" stroke="#4a4a4a" stroke-width="1.3"/><path d="M18.2,629.8 L11,633.5 L18.2,637.2 Z" fill="#4a4a4a"/><path d="M32.4,629.8 L25.2,633.5 L32.4,637.2 Z" fill="#4a4a4a"/><path d="M120,629.4 L126.8,633.5 L120,637.6 Z" fill="#d8d8d8"/><path d="M133.9,629.8 L141,633.5 L133.9,637.2 Z" fill="#4a4a4a"/><path d="M142.4,629.8 V637.2" stroke="#4a4a4a" stroke-width="1.3"/><rect x="150" y="628.6" width="9" height="10.6" rx="1.5" fill="none" stroke="#4a4a4a" stroke-width="1.2"/><path d="M152.5,631.5 L156.5,636 M156.5,631.5 L152.5,636" stroke="#4a4a4a" stroke-width="1"/><path d="M167,636 Q166,631 171,631 Q175,631 174.5,634" fill="none" stroke="#3e3e3e" stroke-width="1.2"/><rect x="180.8" y="628.4" width="7.2" height="8.6" rx="1" fill="none" stroke="#d0d0d0" stroke-width="1.1"/><path d="M189.6,630.8 V638.8 H183.2" fill="none" stroke="#d0d0d0" stroke-width="1.1"/><rect x="197.2" y="628.6" width="9.8" height="11" rx="1.5" fill="none" stroke="#5a5a5a" stroke-width="1.1"/><path d="M199.4,631.6 H204.8 M199.4,633.8 H204.8 M199.4,636 H204.8" stroke="#5a5a5a" stroke-width="0.9"/></svg>
<div class="abs t" style="left:227.99px;top:630.00px;font-size:8.41px;color:#c4c4c4;transform:scaleX(1.0752);transform-origin:0 0;">Interact with canvas and / or panel to set effect parameters.</div>
<div class="abs t" style="left:787.52px;top:630.00px;font-size:8.55px;color:#ececec;transform:scaleX(1.0552);transform-origin:0 0;">1930s.jpg (49.2%)</div>
<svg style="left:0;top:0" width="1000" height="643" viewBox="0 0 1000 643"><path d="M991.30,633.90 L991.30,630.30 M991.30,633.90 L994.72,632.79 M991.30,633.90 L993.42,636.81 M991.30,633.90 L989.18,636.81 M991.30,633.90 L987.88,632.79 " stroke="#c8c8c8" stroke-width="1.2" stroke-linecap="round"/></svg>
<div class="abs" style="left:483.5px;top:310.9px;width:270.3px;height:182.6px;border-radius:9px;background:#343434;box-shadow:0 0 0 1px #1a1a1a,0 12px 30px rgba(0,0,0,0.75);border:1px solid #454545"></div>
<svg style="left:0;top:0" width="1000" height="643" viewBox="0 0 1000 643"><circle cx="494.7" cy="322" r="4.9" fill="#ec5e4a"/><circle cx="511.2" cy="322" r="4.9" fill="#4a4a4a"/><circle cx="527.5" cy="322" r="4.9" fill="#4a4a4a"/></svg>
<div class="abs t" style="left:592.32px;top:318.00px;font-size:10.14px;color:#ececec;font-weight:bold;transform:scaleX(0.8851);transform-origin:0 0;">Perlin Noise</div>
<div class="abs t" style="left:490.90px;top:343.00px;font-size:9.13px;color:#dcdcdc;transform:scaleX(0.9824);transform-origin:0 0;">Octaves</div>
<div class="abs" style="left:492.5px;top:357.5px;width:200.50px;height:7.00px;background:#1e1e1e;border-radius:3.5px;"></div>
<div class="abs" style="left:492.5px;top:357.5px;width:30.50px;height:7.00px;background:#3a72c8;border-radius:3.5px 0 0 3.5px;"></div>
<svg style="left:0;top:0" width="1000" height="643" viewBox="0 0 1000 643"><circle cx="523" cy="361" r="5.6" fill="#e4e4e4" stroke="#2f6fd0" stroke-width="2"/></svg>
<div class="abs" style="left:701px;top:354.3px;width:44.50px;height:14.10px;background:#232323;border-radius:2px;"></div>
<div class="abs t" style="left:702.92px;top:358.00px;font-size:9.13px;color:#ececec;transform:scaleX(0.9892);transform-origin:0 0;">4 px</div>
<div class="abs t" style="left:491.23px;top:374.00px;font-size:8.99px;color:#dcdcdc;transform:scaleX(0.9933);transform-origin:0 0;">Zoom</div>
<div class="abs" style="left:492.5px;top:386.5px;width:200.50px;height:7.00px;background:#1e1e1e;border-radius:3.5px;"></div>
<div class="abs" style="left:492.5px;top:386.5px;width:109.30px;height:7.00px;background:#3a72c8;border-radius:3.5px 0 0 3.5px;"></div>
<svg style="left:0;top:0" width="1000" height="643" viewBox="0 0 1000 643"><circle cx="601.8" cy="390" r="4.5" fill="#e4e4e4"/></svg>
<div class="abs" style="left:701px;top:383px;width:44.50px;height:14.00px;background:#232323;border-radius:2px;"></div>
<div class="abs t" style="left:702.71px;top:387.00px;font-size:9.13px;color:#ececec;transform:scaleX(0.9373);transform-origin:0 0;">91.1 px</div>
<div class="abs t" style="left:490.79px;top:404.00px;font-size:8.70px;color:#dcdcdc;transform:scaleX(1.0215);transform-origin:0 0;">Persistence</div>
<div class="abs" style="left:492.5px;top:418.1px;width:200.50px;height:7.00px;background:#1e1e1e;border-radius:3.5px;"></div>
<div class="abs" style="left:492.5px;top:418.1px;width:164.50px;height:7.00px;background:#3a72c8;border-radius:3.5px 0 0 3.5px;"></div>
<svg style="left:0;top:0" width="1000" height="643" viewBox="0 0 1000 643"><circle cx="657" cy="421.6" r="4.5" fill="#e4e4e4"/></svg>
<div class="abs" style="left:701px;top:415.2px;width:44.50px;height:13.60px;background:#232323;border-radius:2px;"></div>
<div class="abs t" style="left:702.71px;top:419.00px;font-size:9.13px;color:#ececec;transform:scaleX(0.9509);transform-origin:0 0;">83.2 px</div>
<div class="abs t" style="left:490.79px;top:438.00px;font-size:8.99px;color:#dcdcdc;transform:scaleX(0.9890);transform-origin:0 0;">Blend Mode</div>
<div class="abs" style="left:491.2px;top:447.9px;width:137.60px;height:15.90px;background:#525252;border-radius:3px;"></div>
<div class="abs t" style="left:494.06px;top:452.00px;font-size:8.70px;color:#f0f0f0;transform:scaleX(1.0584);transform-origin:0 0;">Normal</div>
<svg style="left:618px;top:449.5px" width="8" height="13" viewBox="0 0 8 13" fill="none" stroke="#e0e0e0" stroke-width="1.1" stroke-linecap="round" stroke-linejoin="round"><path d="M1.8,4.8 L4,2.6 L6.2,4.8 M1.8,8.2 L4,10.4 L6.2,8.2"/></svg>
<svg style="left:0;top:0" width="1000" height="643" viewBox="0 0 1000 643"><path d="M492.2,478.7 Q499,472.4 505.8,478.7 Q499,485 492.2,478.7 Z" fill="#f0f0f0"/><circle cx="499" cy="478.7" r="2.3" fill="#343434"/><circle cx="499" cy="478.7" r="1" fill="#f0f0f0"/><defs><pattern id="hp" width="1.4" height="1.4" patternUnits="userSpaceOnUse"><rect width="0.7" height="0.7" fill="#cfcfcf"/><rect x="0.7" y="0.7" width="0.7" height="0.7" fill="#cfcfcf"/></pattern></defs><path d="M518.4,473.2 A5.4,5.4 0 0,0 518.4,484 Z" fill="url(#hp)"/><path d="M519.2,473.2 A5.4,5.4 0 0,1 519.2,484 Z" fill="#e4e4e4"/><path d="M536.4,473.2 A5.4,5.4 0 0,0 536.4,484 Z" fill="#e4e4e4"/><path d="M537.4,473.4 L542.6,473.4 L542.6,484 L537.4,484 A6,6 0 0,0 537.4,473.4 Z" fill="url(#hp)"/><rect x="492.2" y="471.6" width="1.3" height="1.3" fill="#8a8a8a"/><rect x="504.8" y="471.6" width="1.3" height="1.3" fill="#8a8a8a"/><rect x="492.2" y="484.5" width="1.3" height="1.3" fill="#8a8a8a"/><rect x="504.8" y="484.5" width="1.3" height="1.3" fill="#8a8a8a"/><rect x="511.1" y="471.6" width="1.3" height="1.3" fill="#8a8a8a"/><rect x="523.7" y="471.6" width="1.3" height="1.3" fill="#8a8a8a"/><rect x="511.1" y="484.5" width="1.3" height="1.3" fill="#8a8a8a"/><rect x="523.7" y="484.5" width="1.3" height="1.3" fill="#8a8a8a"/><rect x="530.0" y="471.6" width="1.3" height="1.3" fill="#8a8a8a"/><rect x="542.6" y="471.6" width="1.3" height="1.3" fill="#8a8a8a"/><rect x="530.0" y="484.5" width="1.3" height="1.3" fill="#8a8a8a"/><rect x="542.6" y="484.5" width="1.3" height="1.3" fill="#8a8a8a"/></svg>
<div class="abs" style="left:631.2px;top:473.2px;width:53.70px;height:13.60px;background:#535353;border-radius:3px;"></div>
<div class="abs t" style="left:643.55px;top:475.00px;font-size:8.84px;color:#f0f0f0;transform:scaleX(1.0122);transform-origin:0 0;">Cancel</div>
<div class="abs" style="left:692.1px;top:473.2px;width:53.40px;height:13.60px;background:#535353;border-radius:3px;"></div>
<div class="abs t" style="left:707.10px;top:475.00px;font-size:8.84px;color:#f0f0f0;transform:scaleX(1.0135);transform-origin:0 0;">Apply</div>
</body></html>
